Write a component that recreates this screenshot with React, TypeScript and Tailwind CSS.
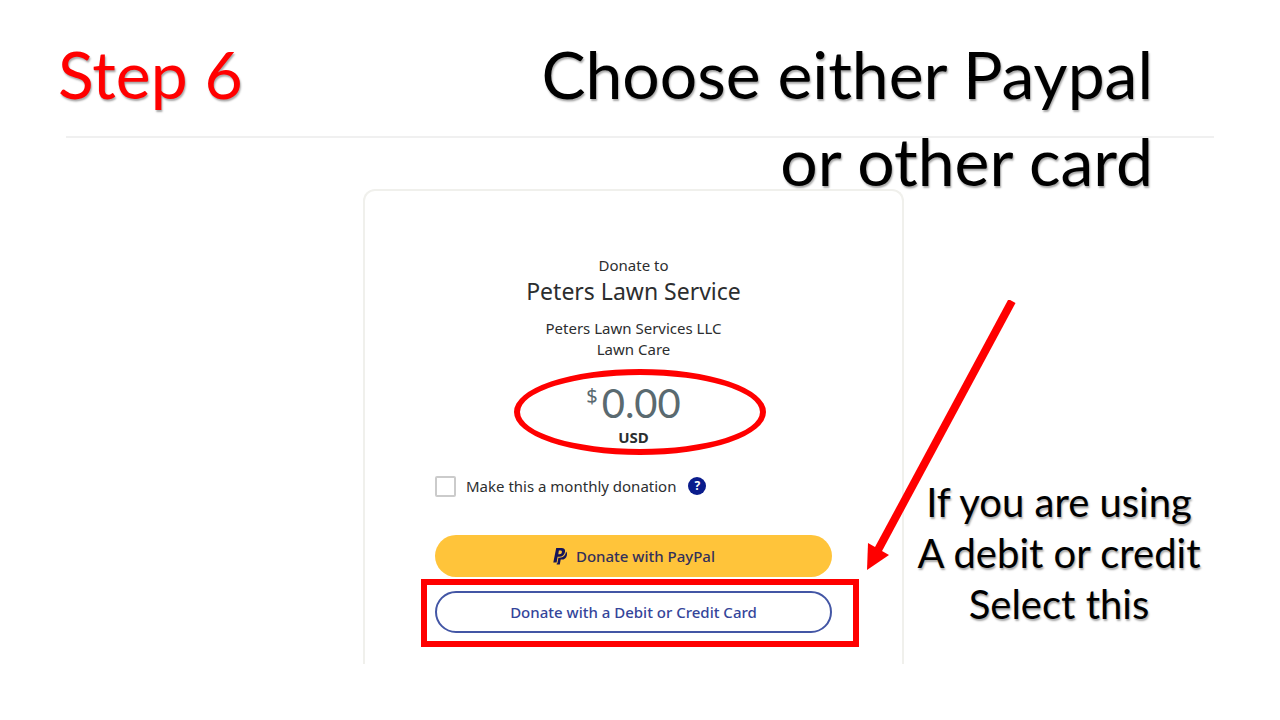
const shadow = "[text-shadow:1px_2px_2px_rgba(0,0,0,0.35)]";

function PayPalMark() {
  return (
    <svg aria-hidden="true" className="mr-2 h-[17px] w-4" viewBox="0 0 16 17">
      <path
        fill="#14145a"
        fillRule="evenodd"
        d="M4.2 0 H9.4 C12.2 0 13.5 1.5 13 4 C12.4 7.2 10.4 8.8 7.2 8.8 H5.6 L4.6 14.4 H1.3 Z M6.9 2.6 L6.3 6.2 H7.5 C8.9 6.2 9.7 5.6 9.9 4.3 C10.1 3.1 9.5 2.6 8.2 2.6 Z"
      />
      <path
        fill="#14145a"
        d="M14 3.6 C15 4.5 15.2 5.8 14.9 7.2 C14.3 10.2 12.4 11.6 9.5 11.6 H8.7 L7.8 16.6 H4.6 L4.9 15.2 H5.4 L6.4 9.8 H7.6 C11.3 9.8 13.5 7.6 14 3.6 Z"
      />
    </svg>
  );
}

function Amount() {
  return (
    <div className="relative mt-5 flex flex-col items-center">
      <p className="flex items-start text-[#5a6a70]">
        <sup className="top-0 mt-1 mr-1 text-xl leading-6 font-normal">$</sup>
        <span className="font-[Lato,sans-serif] text-[40px] leading-[46px]">0.00</span>
      </p>
      <p className="text-[15px] leading-[22px] font-bold">USD</p>
      <div className="absolute -top-[11px] left-[79px] h-[86px] w-[252px] rounded-[50%] border-6 border-[#ff0000]" />
    </div>
  );
}

function DonateCard() {
  return (
    <section className="relative mr-[13px] w-[541px] rounded-t-xl border-2 border-b-0 border-[#f0f0ec] px-[70px] pt-16 pb-[31px] font-['Noto_Sans',sans-serif] text-[#2c2e2f]">
      <div className="text-center">
        <p className="text-[15px] leading-5">Donate to</p>
        <h2 className="mt-0.5 text-[23px] leading-7">Peters Lawn Service</h2>
        <p className="mt-[13px] text-[15px] leading-[21px]">Peters Lawn Services LLC</p>
        <p className="text-[15px] leading-[21px]">Lawn Care</p>
      </div>
      <Amount />
      <div className="mt-[26px] flex h-6 items-center">
        <input
          id="monthly"
          type="checkbox"
          className="size-[21px] appearance-none rounded-xs border-2 border-[#cbcbcb] bg-white"
        />
        <label htmlFor="monthly" className="ml-2.5 text-[15px] leading-6">
          Make this a monthly donation
        </label>
        <button
          type="button"
          aria-label="About monthly donations"
          className="ml-3 flex size-[18px] items-center justify-center rounded-full bg-[#0a1c8c] text-xs leading-none font-bold text-white"
        >
          ?
        </button>
      </div>
      <button
        type="button"
        className="mt-[37px] flex h-[42px] w-full items-center justify-center rounded-full bg-[#ffc43a] text-[15px] font-medium text-[#33305a]"
      >
        <PayPalMark />
        Donate with PayPal
      </button>
      <div className="relative mt-3.5">
        <button
          type="button"
          className="h-[42px] w-full rounded-full border-2 border-[#4356a5] text-[15px] font-medium text-[#34459a]"
        >
          Donate with a Debit or Credit Card
        </button>
        <div className="absolute -top-3 -right-[27px] -bottom-3.5 -left-3.5 border-6 border-[#ff0000]" />
      </div>
      <svg
        aria-hidden="true"
        className="absolute top-[109px] left-[502px] h-[271px] w-[160px]"
        viewBox="0 0 160 271"
      >
        <path d="M145 1 L11 250" stroke="#ff0000" strokeWidth="8" />
        <path d="M0 270 L1 243 L22 255 Z" fill="#ff0000" />
      </svg>
      <p
        className={`absolute top-[286px] left-[534px] w-[320px] text-center font-[Lato,sans-serif] text-[40px] leading-[51px] text-black ${shadow}`}
      >
        If you are using
        <br />
        A debit or credit
        <br />
        Select this
      </p>
    </section>
  );
}

export default function App() {
  return (
    <main className="flex min-h-screen flex-col overflow-hidden bg-white">
      <header className="relative z-10 mx-[66px] flex h-[138px] justify-between border-b-2 border-[#f0f0f0] pt-[30px] pr-[61px] font-[Lato,sans-serif] text-[66px] leading-[87px]">
        <h1 className={`-ml-2 text-[#ff0000] ${shadow}`}>Step 6</h1>
        <p className={`text-right text-black ${shadow}`}>
          Choose either Paypal
          <br />
          or other card
        </p>
      </header>
      <div className="mt-[51px] flex justify-center">
        <DonateCard />
      </div>
    </main>
  );
}
